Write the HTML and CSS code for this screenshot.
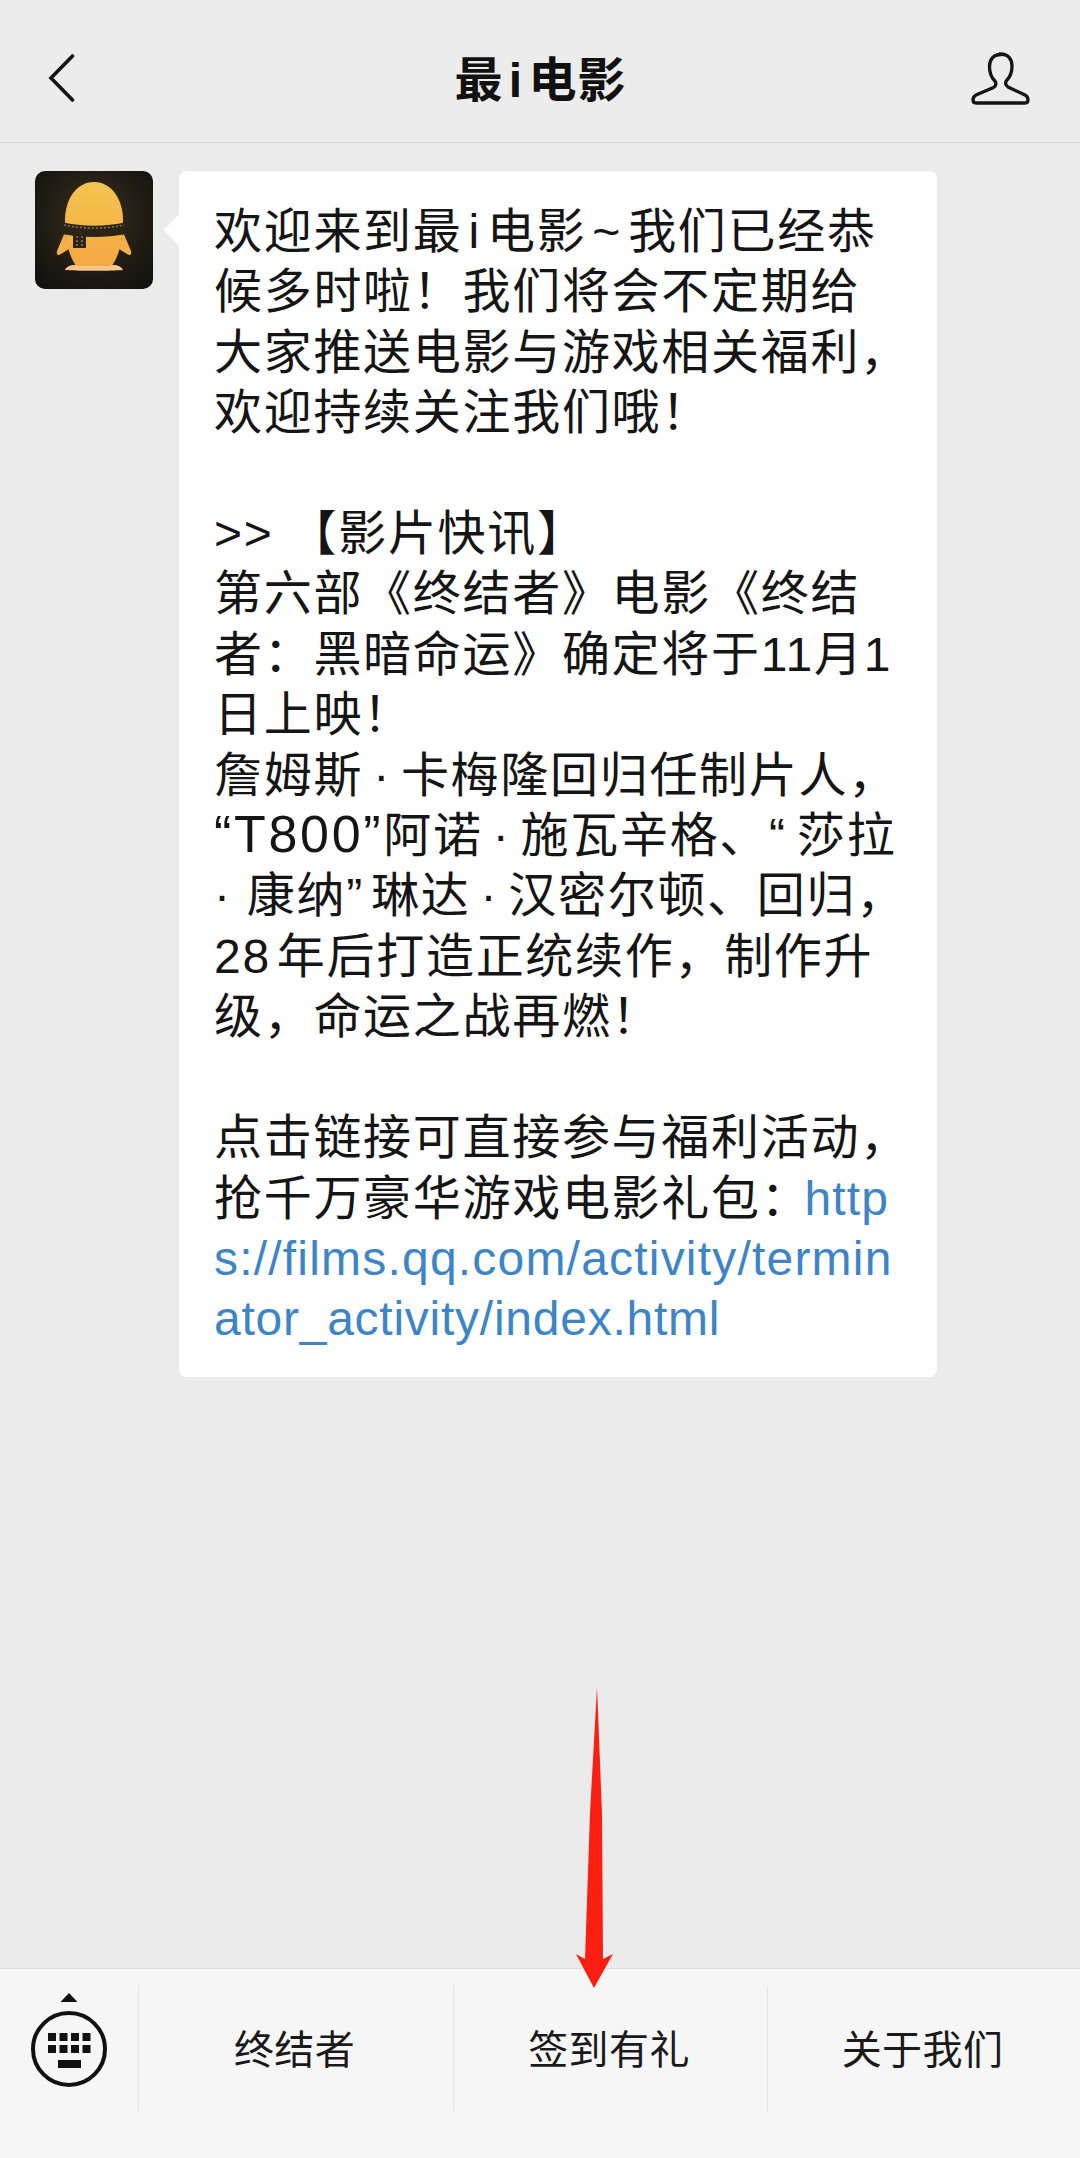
FILE: index.html
```html
<!DOCTYPE html>
<html lang="zh">
<head>
<meta charset="utf-8">
<title>最i电影</title>
<link rel="stylesheet" href="styles.css">
</head>
<body>
<div class="page">
  <header class="nav">
    <svg class="nav-back" viewBox="0 0 28 50" width="28" height="50"><path d="M25.5 3 L4 25 L25.5 47" fill="none" stroke="#151515" stroke-width="3.6" stroke-linecap="round"/></svg>
    <h1 class="nav-title">最 i 电影</h1>
    <svg class="nav-user" viewBox="0 0 60 56" width="60" height="56"><path d="M30.5 4.5c-7 0-11 5-11 12 0 6 2 11 5 14 2 2 2 5-1 7L6 45c-2 1-3 3-3 5 0 2 1 3 3 3h49c2 0 3-1 3-3 0-2-1-4-3-5l-17-8c-3-2-3-5-1-7 3-3 5-8 5-14 0-7-4-12-11.500-12z" fill="none" stroke="#151515" stroke-width="3.300"/></svg>
  </header>
  <main class="chat">
    <div class="msg">
      <svg class="avatar" viewBox="0 0 118 118" width="118" height="118">
        <defs>
          <linearGradient id="egg" x1="0" y1="0" x2="0" y2="1"><stop offset="0" stop-color="#f3c552"/><stop offset=".5" stop-color="#f5b748"/><stop offset="1" stop-color="#f5a742"/></linearGradient>
          <radialGradient id="bg" cx=".5" cy=".4" r=".7"><stop offset="0" stop-color="#3b301c"/><stop offset=".7" stop-color="#1d1a13"/><stop offset="1" stop-color="#14120e"/></radialGradient>
        </defs>
        <rect width="118" height="118" rx="10" fill="url(#bg)"/>
        <path d="M30 61 L22 80c-1 4 1 5 4 3l8-5zM88 61l8 19c1 4-1 5-4 3l-8-5z" fill="#f4ae48"/>
        <path d="M59 11c-18 0-29 18-29 38 0 20 4 37 12 47h34c8-10 12-27 12-47 0-20-11-38-29-38z" fill="url(#egg)"/>
        <path d="M30 99c2-5 10-6 14-4h30c4-2 12-1 14 4-10 1-48 1-58 0z" fill="#f7c68a"/>
        <path d="M27 51c20 5 44 5 64 0v12c-20 4-44 4-64 0z" fill="#2a2316"/>
        <path d="M38 62h13v15H38z" fill="#2a2316"/>
        <path d="M29 54c19 4 41 4 60 0M42 65v10M47 65v10" fill="none" stroke="#8a7a55" stroke-width="1.500" stroke-dasharray="2 2"/>
      </svg>
      <div class="bubble">
        <p class="text">欢迎来到最 i 电影 ~ 我们已经恭<br>候多时啦！我们将会不定期给<br>大家推送电影与游戏相关福利，<br>欢迎持续关注我们哦！<br><br><span class="gap">&gt;&gt; </span>【影片快讯】<br>第六部《终结者》电影《终结<br>者：黑暗命运》确定将于11月1<br>日上映！<br>詹姆斯<span class="dot"> · </span>卡梅隆回归任制片人，<br><span class="latin">“T800”</span>阿诺<span class="dot"> · </span>施瓦辛格、<span class="quote">“</span>莎拉<br><span class="gap">· </span>康纳<span class="quote-end">”</span>琳达<span class="dot"> · </span>汉密尔顿、回归，<br>28 年后打造正统续作，制作升<br>级，命运之战再燃！<br><br>点击链接可直接参与福利活动，<br>抢千万豪华游戏电影礼包：<a class="link" href="#">http<br>s://films.qq.com/activity/termin<br><span class="link-end">ator_activity/index.html</span></a></p>
      </div>
    </div>
  </main>
  <svg class="arrow" viewBox="0 0 38 301" width="38" height="301"><path d="M22 0 L27 126 L28 272 L38 267 L19 301 L1 267 L10 272 L15 126 Z" fill="#fb1f12"/></svg>
  <footer class="menu">
    <div class="menu-kb">
      <svg viewBox="0 0 78 96" width="78" height="96">
        <path d="M39 0l8.500 9h-17z" fill="#111"/>
        <circle cx="39" cy="56" r="36" fill="none" stroke="#111" stroke-width="4"/>
        <g fill="#111"><rect x="18" y="40" width="8" height="8"/><rect x="29.500" y="40" width="8" height="8"/><rect x="41" y="40" width="8" height="8"/><rect x="52.500" y="40" width="8" height="8"/><rect x="18" y="52" width="8" height="8"/><rect x="29.500" y="52" width="8" height="8"/><rect x="41" y="52" width="8" height="8"/><rect x="52.500" y="52" width="8" height="8"/><rect x="28" y="67" width="23" height="8"/></g>
      </svg>
    </div>
    <div class="menu-item">终结者</div>
    <div class="menu-item">签到有礼</div>
    <div class="menu-item">关于我们</div>
  </footer>
</div>
</body>
</html>
```
FILE: styles.css
```css
* { box-sizing: border-box; }
html, body { margin: 0; padding: 0; }
body {
  font-family: "Liberation Sans", "Noto Sans CJK SC", sans-serif;
  color: #111;
  background: #ebebeb;
}
.page {
  position: relative;
  width: 1080px;
  height: 2158px;
  display: flex;
  flex-direction: column;
  overflow: hidden;
}
.nav {
  height: 143px;
  flex: none;
  display: flex;
  align-items: center;
  justify-content: space-between;
  padding: 14px 50px 0 47px;
  border-bottom: 1px solid #d6d6d6;
  background: #ececec;
}
.nav-title {
  margin: 0 0 4px 36px;
  font-size: 48px;
  font-weight: 700;
  word-spacing: -9px;
  letter-spacing: 1px;
}
.chat {
  flex: 1;
  padding: 28px 0 0 35px;
}
.msg {
  display: flex;
  align-items: flex-start;
  gap: 26px;
}
.avatar { flex: none; display: block; }
.bubble {
  position: relative;
  width: 758px;
  padding: 31px 0 27px 35px;
  background: #fff;
  border-radius: 8px;
}
.bubble::before {
  content: "";
  position: absolute;
  left: -11px;
  top: 48px;
  width: 22px;
  height: 22px;
  background: #fff;
  transform: rotate(45deg);
}
.text {
  position: relative;
  margin: 0;
  font-size: 48px;
  line-height: 60.4px;
  letter-spacing: 1.7px;
  word-spacing: -9px;
  white-space: nowrap;
  color: #151515;
}
.gap { word-spacing: 0; }
.dot { word-spacing: -5px; }
.latin { font-size: 52px; line-height: 1; letter-spacing: 2.7px; }
.quote { letter-spacing: 12px; }
.quote-end { letter-spacing: 9px; }
.link { margin-left: -6px; color: #3d85c6; text-decoration: none; letter-spacing: 1.2px; }
.link-end { letter-spacing: .75px; }
.arrow {
  position: absolute;
  left: 575px;
  top: 1687px;
}
.menu {
  height: 190px;
  flex: none;
  display: grid;
  grid-template-columns: 138px 315px 314px 313px;
  padding-top: 17px;
  border-top: 1px solid #dcdcdc;
  background: #f6f6f6;
}
.menu-kb {
  height: 125px;
  display: flex;
  justify-content: center;
  padding-top: 7px;
}
.menu-item {
  height: 125px;
  display: flex;
  align-items: center;
  justify-content: center;
  border-left: 1px solid #e4e4e4;
  font-size: 40px;
  letter-spacing: .4px;
  color: #1a1a1a;
  padding: 0 3px 4px 0;
}
```
